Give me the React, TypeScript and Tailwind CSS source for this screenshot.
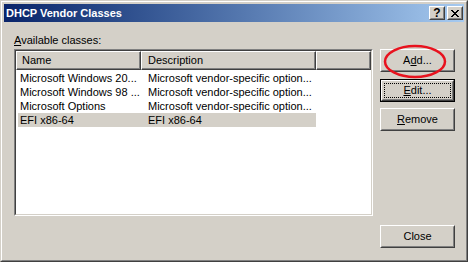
import React from "react";

const font = { fontFamily: '"Liberation Sans", Arial, sans-serif' };

function Btn({
  children,
  isDefault,
}: {
  children: React.ReactNode;
  isDefault?: boolean;
}) {
  if (isDefault) {
    return (
      <div className="w-[75px] h-[23px] border border-black">
        <div className="w-full h-full border border-t-white border-l-white border-r-[#404040] border-b-[#404040]">
          <div className="w-full h-full border border-t-[#d4d0c8] border-l-[#d4d0c8] border-r-[#808080] border-b-[#808080] bg-[#d4d0c8] p-[1px]">
            <div className="w-full h-full border border-dotted border-black flex items-center justify-center text-[11px] text-black leading-none">
              {children}
            </div>
          </div>
        </div>
      </div>
    );
  }
  return (
    <div className="w-[75px] h-[23px] border border-t-white border-l-white border-r-[#404040] border-b-[#404040]">
      <div className="w-full h-full border border-t-[#d4d0c8] border-l-[#d4d0c8] border-r-[#808080] border-b-[#808080] bg-[#d4d0c8] flex items-center justify-center text-[11px] text-black leading-none">
        {children}
      </div>
    </div>
  );
}

function TitleBtn({ children }: { children: React.ReactNode }) {
  return (
    <div className="w-[16px] h-[14px] border border-t-white border-l-white border-r-[#404040] border-b-[#404040]">
      <div className="w-full h-full border border-t-[#d4d0c8] border-l-[#d4d0c8] border-r-[#808080] border-b-[#808080] bg-[#d4d0c8] flex items-center justify-center text-[12px] font-bold text-black leading-none">
        {children}
      </div>
    </div>
  );
}

const rows = [
  ["Microsoft Windows 20...", "Microsoft vendor-specific option..."],
  ["Microsoft Windows 98 ...", "Microsoft vendor-specific option..."],
  ["Microsoft Options", "Microsoft vendor-specific option..."],
  ["EFI x86-64", "EFI x86-64"],
];

export default function App() {
  return (
    <div
      className="relative w-[468px] h-[262px] border border-t-[#d4d0c8] border-l-[#d4d0c8] border-r-[#404040] border-b-[#404040] bg-[#d4d0c8]"
      style={font}
    >
      <div className="w-full h-full border border-t-white border-l-white border-r-[#808080] border-b-[#808080] p-[2px] flex flex-col">
        {/* title bar */}
        <div className="h-[18px] flex items-center bg-gradient-to-r from-[#0a246a] to-[#a6caf0] pl-[2px] pr-[1px]">
          <div className="text-white font-bold text-[11px] leading-none flex-1">
            DHCP Vendor Classes
          </div>
          <div className="flex gap-[2px]">
            <TitleBtn>?</TitleBtn>
            <TitleBtn>
              <svg width="8" height="7" viewBox="0 0 8 7">
                <path d="M0 0L7 7M1 0L8 7M7 0L0 7M8 0L1 7" stroke="black" strokeWidth="1" />
              </svg>
            </TitleBtn>
          </div>
        </div>
        {/* body */}
        <div className="flex-1 flex pl-[10px] pr-[9px] pt-[12px] pb-[10px] gap-[7px]">
          <div className="w-[359px] shrink-0 flex flex-col">
            <div className="h-[13px] text-[11px] leading-[13px] text-black mb-[2px]">
              <span className="underline">A</span>vailable classes:
            </div>
            <div className="h-[167px] border border-t-[#808080] border-l-[#808080] border-r-white border-b-white">
              <div className="w-full h-full border border-t-[#404040] border-l-[#404040] border-r-[#d4d0c8] border-b-[#d4d0c8] bg-white flex flex-col">
                <div className="h-[19px] flex text-[11px] text-black">
                  <div className="w-[125px] border border-t-white border-l-white border-r-[#404040] border-b-[#404040] bg-[#d4d0c8]">
                    <div className="h-full border-r border-b border-[#808080] flex items-center pl-[5px]">Name</div>
                  </div>
                  <div className="w-[175px] border border-t-white border-l-white border-r-[#404040] border-b-[#404040] bg-[#d4d0c8]">
                    <div className="h-full border-r border-b border-[#808080] flex items-center pl-[6px]">Description</div>
                  </div>
                  <div className="flex-1 border border-t-white border-l-white border-r-[#404040] border-b-[#404040] bg-[#d4d0c8]">
                    <div className="h-full border-r border-b border-[#808080]" />
                  </div>
                </div>
                <div className="mt-[1px] flex flex-col">
                  {rows.map((r, i) => (
                    <div
                      key={i}
                      className={`ml-[2px] w-[298px] h-[14px] flex items-center text-[11px] text-black leading-none ${
                        i === 3 ? "bg-[#d4d0c8]" : ""
                      }`}
                    >
                      <div className="w-[123px] pl-[2px] whitespace-nowrap">{r[0]}</div>
                      <div className="pl-[7px] whitespace-nowrap">{r[1]}</div>
                    </div>
                  ))}
                </div>
              </div>
            </div>
          </div>
          <div className="flex flex-col pt-[15px]">
            <Btn>
              A<span className="underline">d</span>d...
            </Btn>
            <div className="mt-[7px]">
              <Btn isDefault>
                <span className="underline">E</span>dit...
              </Btn>
            </div>
            <div className="mt-[6px]">
              <Btn>
                <span className="underline">R</span>emove
              </Btn>
            </div>
            <div className="mt-auto">
              <Btn>Close</Btn>
            </div>
          </div>
        </div>
      </div>
      <svg
        className="absolute left-[382px] top-[43px] pointer-events-none"
        width="64"
        height="35"
        viewBox="0 0 64 35"
      >
        <ellipse cx="32" cy="17.5" rx="30" ry="15.5" fill="none" stroke="#e8121e" strokeWidth="2.5" />
      </svg>
    </div>
  );
}
